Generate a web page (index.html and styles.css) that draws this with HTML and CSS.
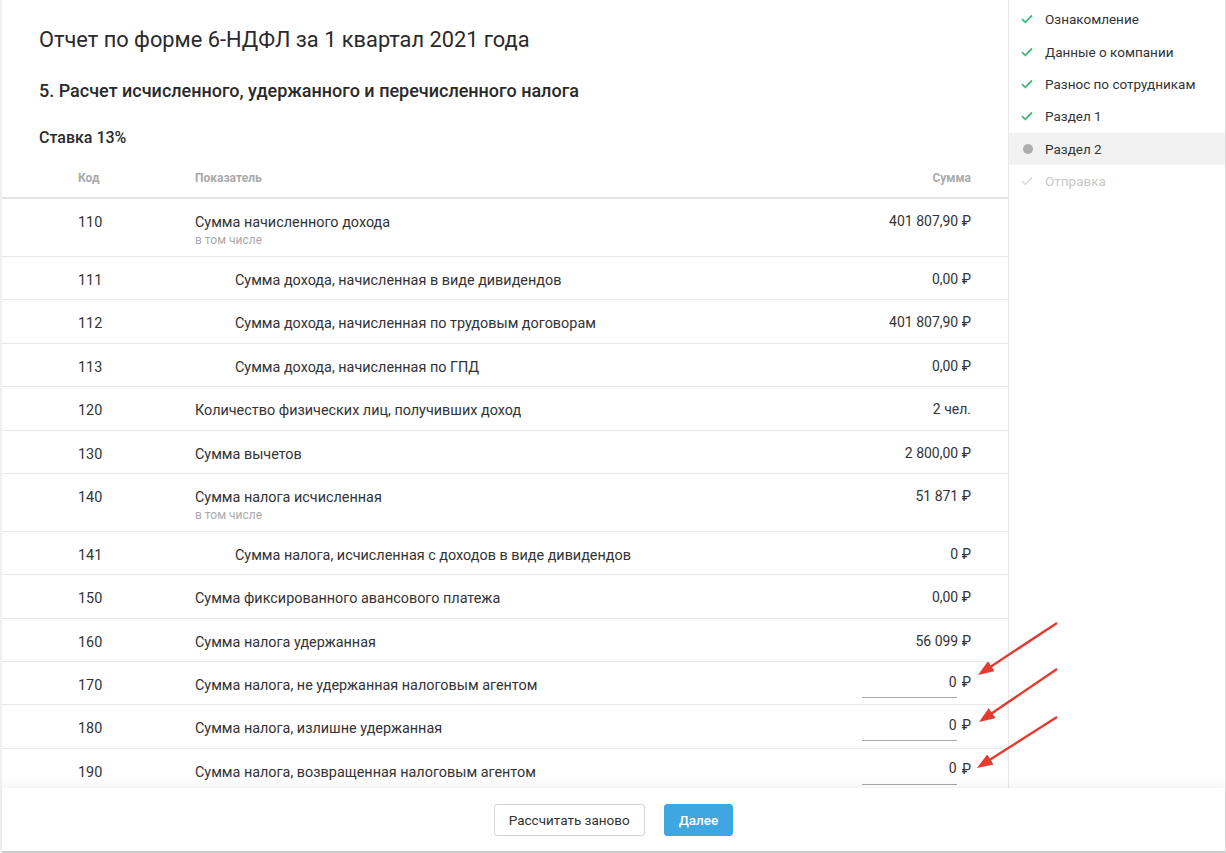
FILE: index.html
```html
<!DOCTYPE html>
<html lang="ru">
<head>
<meta charset="utf-8">
<title>6-НДФЛ</title>
<link rel="stylesheet" href="styles.css">
</head>
<body>
<div class="app">
  <div class="content">
    <main class="main">
      <h1 class="title">Отчет по форме 6-НДФЛ за 1 квартал 2021 года</h1>
      <h2 class="subtitle">5. Расчет исчисленного, удержанного и перечисленного налога</h2>
      <h3 class="rate">Ставка 13%</h3>
      <div class="table">
        <div class="row head">
          <div>Код</div><div>Показатель</div><div class="amt">Сумма</div>
        </div>
        <div class="row">
          <div>110</div><div>Сумма начисленного дохода<div class="sub">в том числе</div></div><div class="amt">401 807,90 ₽</div>
        </div>
        <div class="row">
          <div>111</div><div class="indent">Сумма дохода, начисленная в виде дивидендов</div><div class="amt">0,00 ₽</div>
        </div>
        <div class="row">
          <div>112</div><div class="indent">Сумма дохода, начисленная по трудовым договорам</div><div class="amt">401 807,90 ₽</div>
        </div>
        <div class="row">
          <div>113</div><div class="indent">Сумма дохода, начисленная по ГПД</div><div class="amt">0,00 ₽</div>
        </div>
        <div class="row">
          <div>120</div><div>Количество физических лиц, получивших доход</div><div class="amt">2 чел.</div>
        </div>
        <div class="row">
          <div>130</div><div>Сумма вычетов</div><div class="amt">2 800,00 ₽</div>
        </div>
        <div class="row">
          <div>140</div><div>Сумма налога исчисленная<div class="sub">в том числе</div></div><div class="amt">51 871 ₽</div>
        </div>
        <div class="row">
          <div>141</div><div class="indent">Сумма налога, исчисленная с доходов в виде дивидендов</div><div class="amt">0 ₽</div>
        </div>
        <div class="row">
          <div>150</div><div>Сумма фиксированного авансового платежа</div><div class="amt">0,00 ₽</div>
        </div>
        <div class="row">
          <div>160</div><div>Сумма налога удержанная</div><div class="amt">56 099 ₽</div>
        </div>
        <div class="row">
          <div>170</div><div>Сумма налога, не удержанная налоговым агентом</div><div class="amt field"><input class="inp" type="text" value="0"><span>₽</span></div>
        </div>
        <div class="row">
          <div>180</div><div>Сумма налога, излишне удержанная</div><div class="amt field"><input class="inp" type="text" value="0"><span>₽</span></div>
        </div>
        <div class="row">
          <div>190</div><div>Сумма налога, возвращенная налоговым агентом</div><div class="amt field"><input class="inp" type="text" value="0"><span>₽</span></div>
        </div>
      </div>
    </main>
    <aside class="side">
      <div class="step done"><svg class="ic" viewBox="0 0 12 10"><path d="M1 5.2 L4.3 8.3 L11 1.5"/></svg>Ознакомление</div>
      <div class="step done"><svg class="ic" viewBox="0 0 12 10"><path d="M1 5.2 L4.3 8.3 L11 1.5"/></svg>Данные о компании</div>
      <div class="step done"><svg class="ic" viewBox="0 0 12 10"><path d="M1 5.2 L4.3 8.3 L11 1.5"/></svg>Разнос по сотрудникам</div>
      <div class="step done"><svg class="ic" viewBox="0 0 12 10"><path d="M1 5.2 L4.3 8.3 L11 1.5"/></svg>Раздел 1</div>
      <div class="step active"><span class="dot"></span>Раздел 2</div>
      <div class="step off"><svg class="ic" viewBox="0 0 12 10"><path d="M1 5.2 L4.3 8.3 L11 1.5"/></svg>Отправка</div>
    </aside>
  </div>
  <footer class="footer">
    <button class="btn">Рассчитать заново</button>
    <button class="btn primary">Далее</button>
  </footer>
</div>
<svg class="arrows" width="1226" height="853" viewBox="0 0 1226 853">
  <defs>
    <marker id="ah" markerUnits="userSpaceOnUse" markerWidth="16" markerHeight="12" refX="4" refY="6" orient="auto">
      <path d="M0 0 L16 6 L0 12 Z" fill="#e53a2f"/>
    </marker>
  </defs>
  <line x1="1057" y1="623" x2="988" y2="668.4" marker-end="url(#ah)"/>
  <line x1="1057" y1="669" x2="988.9" y2="715.3" marker-end="url(#ah)"/>
  <line x1="1057" y1="717" x2="987.1" y2="761.6" marker-end="url(#ah)"/>
</svg>
</body>
</html>
```
FILE: styles.css
```css
* { box-sizing: border-box; }
body {
  margin: 0;
  background: #eef0f3;
  font-family: Roboto, "Liberation Sans", sans-serif;
  color: #333;
}
.app {
  margin-left: 2px;
  width: 1224px;
  height: 853px;
  background: #fff;
  border-right: 1px solid #d9d9d9;
  border-bottom: 2px solid #cdcdcd;
  display: flex;
  flex-direction: column;
}
.content {
  display: flex;
  height: 788px;
  overflow: hidden;
}
.main {
  width: 1007px;
  flex: none;
  border-right: 1px solid #e8e8e8;
  padding-top: 24px;
}
.title {
  margin: 0 0 0 37px;
  font-size: 21.8px;
  line-height: 32px;
  font-weight: 400;
  color: #2a2a2a;
}
.subtitle {
  margin: 23px 0 0 37px;
  font-size: 18px;
  line-height: 24px;
  font-weight: 500;
  color: #2a2a2a;
}
.rate {
  margin: 25px 0 0 37px;
  font-size: 16px;
  line-height: 20px;
  font-weight: 500;
  color: #2a2a2a;
}
.table { margin-top: 10px; }
.row {
  display: grid;
  grid-template-columns: 117px 1fr auto;
  align-items: start;
  padding: 14px 37px 8.4px 76px;
  border-bottom: 1px solid #e8e8e8;
  font-size: 14.4px;
  line-height: 20px;
}
.row.head {
  padding: 11px 37px 10px 76px;
  border-bottom: 2px solid #e4e4e4;
  font-size: 12px;
  font-weight: 700;
  color: #aaa;
  line-height: 18px;
}
.sub {
  font-size: 12px;
  line-height: 14.6px;
  color: #aaa;
}
.indent { padding-left: 40px; }
.amt {
  text-align: right;
  margin-top: -2px;
  font-size: 14px;
}
.head .amt { margin-top: 0; font-size: 12px; }
.field {
  display: flex;
  align-items: flex-start;
  gap: 5px;
  margin-top: -2px;
  margin-bottom: -5px;
}
.inp {
  width: 95px;
  height: 24px;
  border: 0;
  border-bottom: 1px solid #a8a8a8;
  padding: 0 0 8px;
  margin: 0;
  font: 14px/16px Roboto, "Liberation Sans", sans-serif;
  color: #333;
  text-align: right;
  background: transparent;
  outline: none;
}
.field span { line-height: 16px; }
.side {
  flex: 1;
  padding-top: 3px;
}
.step {
  display: flex;
  align-items: center;
  height: 32.4px;
  padding-left: 12px;
  font-size: 13.5px;
  color: #333;
}
.ic {
  width: 12px;
  height: 10px;
  margin-right: 12px;
  fill: none;
  stroke: #3dba7b;
  stroke-width: 1.8;
}
.step.active { background: #f2f2f2; }
.dot {
  width: 10px;
  height: 10px;
  border-radius: 50%;
  background: #adadad;
  margin: 0 12px 0 2px;
}
.step.off { color: #c8c8c8; }
.step.off .ic { stroke: #dedede; }
.footer {
  position: relative;
  z-index: 1;
  flex: 1;
  display: flex;
  justify-content: center;
  align-items: flex-start;
  gap: 19px;
  padding-top: 16px;
  background: #fff;
  box-shadow: 0 -4px 9px rgba(0, 0, 0, 0.05);
}
.btn {
  height: 32px;
  padding: 0 14px;
  border: 1px solid #d4d4d4;
  border-radius: 3px;
  background: #fff;
  font: 13.5px Roboto, "Liberation Sans", sans-serif;
  color: #333;
}
.btn.primary {
  background: #3ea6e0;
  border-color: #3ea6e0;
  color: #fff;
  font-weight: 500;
  padding: 0 14px;
}
.arrows {
  position: absolute;
  top: 0;
  left: 0;
  z-index: 5;
  pointer-events: none;
}
.arrows line {
  stroke: #e53a2f;
  stroke-width: 2.4;
}
```
